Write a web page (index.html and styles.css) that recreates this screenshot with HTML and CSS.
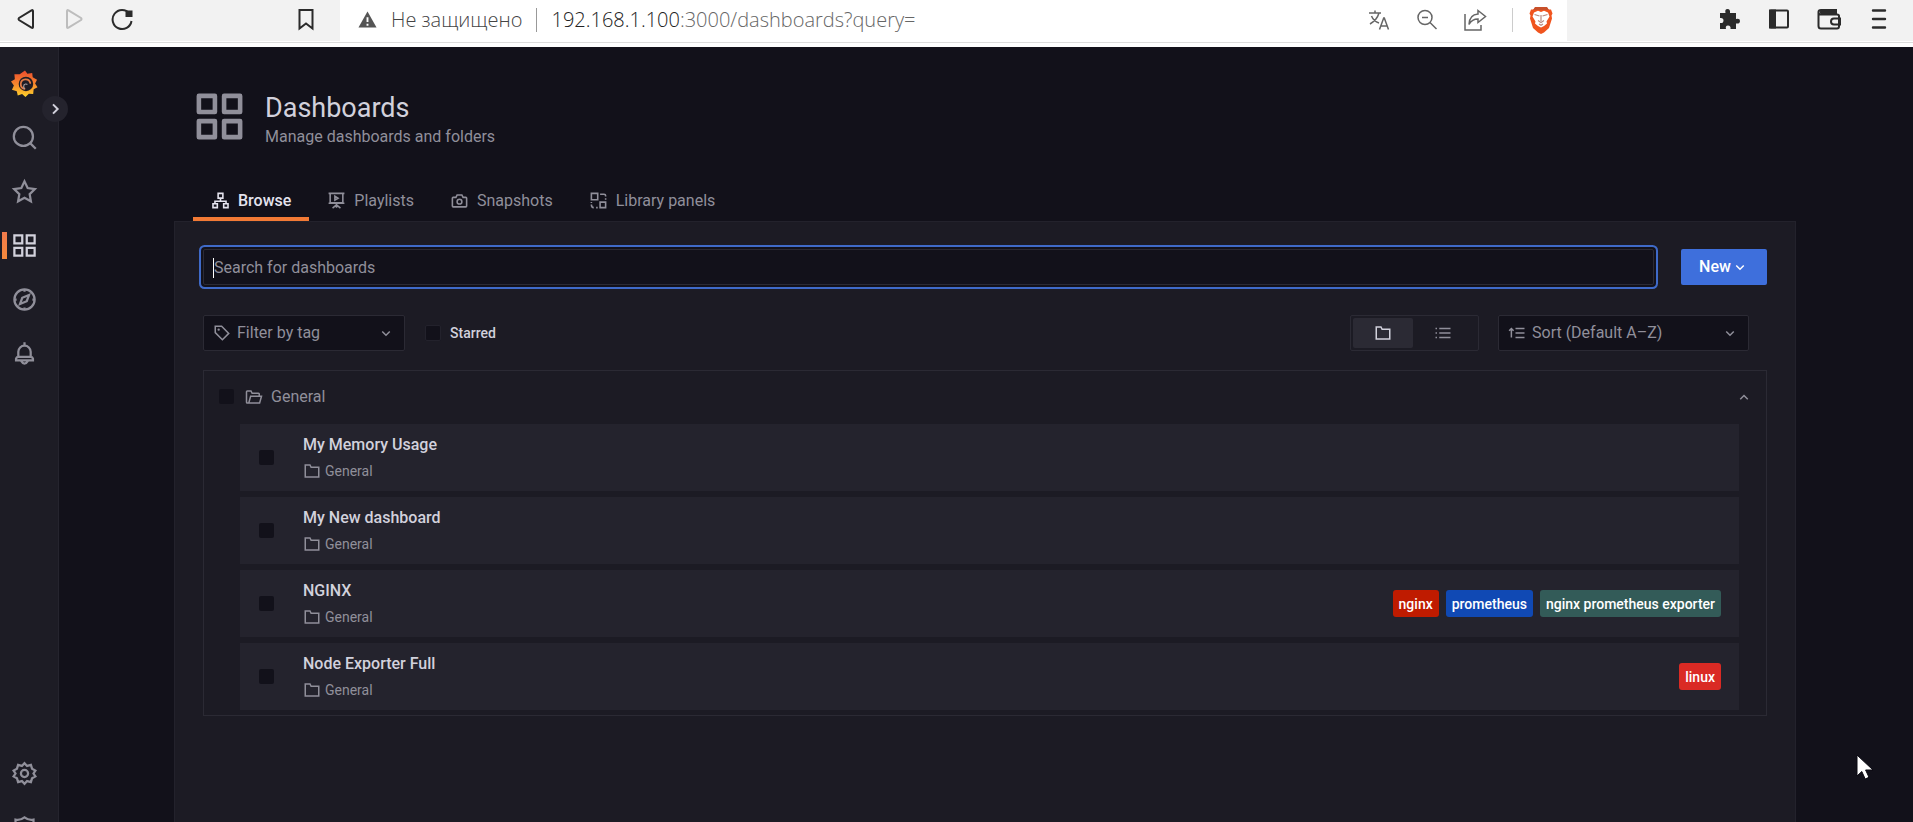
FILE: index.html
```html
<!DOCTYPE html>
<html lang="en">
<head>
<meta charset="utf-8">
<title>Dashboards - Grafana</title>
<link rel="stylesheet" href="styles.css">
</head>
<body>
<svg class="sprite" aria-hidden="true">
  <symbol id="i-apps" viewBox="0 0 24 24"><path d="M3 3h7v7H3zM14 3h7v7h-7zM3 14h7v7H3zM14 14h7v7h-7z"/></symbol>
  <symbol id="i-folder" viewBox="0 0 24 24"><path d="M3 4h6.300l1.500 3H21v13H3z"/></symbol>
  <symbol id="i-down" viewBox="0 0 24 24"><path d="M7 10l5 5 5-5"/></symbol>
  <symbol id="i-up" viewBox="0 0 24 24"><path d="M7 15l5-5 5 5"/></symbol>
</svg>

<header class="chrome">
  <div class="chrome-nav">
    <button class="chrome-btn" aria-label="Back"><svg class="ci" viewBox="0 0 24 24"><path d="M19 4v16q0 1.500-1.500.6L5 13q-1-1 0-2L17.500 3.400Q19 2.500 19 4z"/></svg></button>
    <button class="chrome-btn faded" aria-label="Forward"><svg class="ci" viewBox="0 0 24 24"><path d="M5 4v16q0 1.500 1.500.6L19 13q1-1 0-2L6.500 3.400Q5 2.500 5 4z"/></svg></button>
    <button class="chrome-btn" aria-label="Reload"><svg class="ci" viewBox="0 0 24 24"><path d="M19.500 6.500A9.500 9.500 0 1 0 21.500 14"/><path d="M16.500 4.500h5v4.500h-5z" fill="currentColor"/></svg></button>
  </div>
  <button class="chrome-btn bookmark" aria-label="Bookmark"><svg class="ci" viewBox="0 0 24 24"><path d="M5.500 3h13v18.500l-6.500-5-6.500 5z"/></svg></button>
  <div class="address">
    <svg class="warn" viewBox="0 0 20 20" aria-hidden="true"><path d="M10 1.500 19.500 18.500H.5z" fill="#555"/><path d="M10 7.500v5M10 14.500v2" stroke="#fff" stroke-width="2"/></svg>
    <span class="insecure">Не защищено</span>
    <span class="bar"></span>
    <span class="url"><span class="host">192.168.1.100</span>:3000/dashboards?query=</span>
    <div class="address-tools">
      <button class="chrome-btn thin" aria-label="Translate"><svg class="ci" viewBox="0 0 24 24"><path d="M2 5h12M8 2.500V5M12 5Q10 12 3 16M4.500 8q2 5 7.500 7M12.500 21.500l4.200-11.500h.6l4.200 11.500M14 18h6"/></svg></button>
      <button class="chrome-btn thin" aria-label="Zoom"><svg class="ci" viewBox="0 0 24 24"><circle cx="10" cy="9.500" r="7"/><path d="M15 14.500 21.500 21M7 9.500h6"/></svg></button>
      <button class="chrome-btn thin" aria-label="Share"><svg class="ci" viewBox="0 0 24 24"><path d="M2 6v16h16v-5M15 2.500l7.500 6L15 14.500V11Q9 11 6 16.500 6.500 6.500 15 6z"/></svg></button>
      <span class="bar short"></span>
      <button class="chrome-btn" aria-label="Brave Shields"><svg class="brave" viewBox="0 0 24 28"><path d="M6.500 1h11l2 2.500h2.500l1.500 4-1 2 .5 3-3 9.500-5 4.500-3 1.500-3-1.500-5-4.500L1 12.500l.5-3-1-2L2 3.500h2.500z" fill="#f0541e"/><path d="M6 1h12l2 3H4z" fill="#c8502a"/><path d="M12 6l3-1.200 4 1.700 1.500 4-3 5 .5 2-3 2.500L12 21.500 9 20l-3-2.500.5-2-3-5L5 6.500l4-1.700z" fill="#fff"/><path d="M5.500 8.500l5 1.500M18.500 8.500l-5 1.500M12 9v6M9 14.500l3 2 3-2M10 18l2 1.300 2-1.300" fill="none" stroke="#b98a80" stroke-width="1.200"/></svg></button>
    </div>
  </div>
  <div class="chrome-tools">
    <button class="chrome-btn" aria-label="Extensions"><svg class="ci" viewBox="0 0 24 24"><path d="M3 6h5.500Q7.500 2 10.500 2T13 6h6v6q4-1 4 2t-4 2.500V22h-5.500q.5-3.500-2.500-3.500T9 22H3v-6q3.500.5 3.500-2.500T3 11z" fill="currentColor" stroke="none"/></svg></button>
    <button class="chrome-btn" aria-label="Sidebar"><svg class="ci" viewBox="0 0 24 24"><rect x="3" y="3.500" width="18" height="17" rx="1"/><path d="M3 3.500h5v17H3z" fill="currentColor"/></svg></button>
    <button class="chrome-btn" aria-label="Wallet"><svg class="ci" viewBox="0 0 24 24"><path d="M1.500 5v14q0 2.500 2.500 2.500h16q2 0 2-2V9q0-1.500-2-1.500H4Q1.500 7.500 1.500 5q0-2 2.500-2h15v4"/><path d="M3 4h16v3H4z" fill="currentColor" stroke-width="1"/><path d="M23 11.500h-6a3 3 0 0 0 0 6h6z"/></svg></button>
    <button class="chrome-btn" aria-label="Menu"><svg class="ci" viewBox="0 0 24 24"><path d="M6 3.500h12M6 12h12M6 20.500h12" stroke-width="2.400" stroke-linecap="round"/></svg></button>
  </div>
</header>

<div class="app">
  <nav class="sidebar" aria-label="Main">
    <a class="side-link" href="#" aria-label="Home"><svg class="logo" viewBox="0 0 28 28">
      <defs><linearGradient id="g" x1="0" y1="0" x2="0" y2="1"><stop offset="0" stop-color="#ec4b2e"/><stop offset=".5" stop-color="#f5852d"/><stop offset="1" stop-color="#fcd32b"/></linearGradient></defs>
      <path d="M14.500.5 17 4l5-1 .5 4.500L27 10l-2 4 2.500 4-4 2-.5 5-4.500-.5L15 28l-3.500-3-4.500 1.500L6 22l-5-1.500L3 16 0 12l4-2.500-.5-5L9 4.500z" fill="url(#g)"/>
      <circle cx="15.500" cy="14.500" r="7.500" fill="#1d1c25"/>
      <path d="M14 19.500a5 5 0 1 1 6-6" fill="none" stroke="#e07a45" stroke-width="1.800" stroke-linecap="round"/>
      <path d="M14 19.500q-1.500-2-.5-4a2.500 2.500 0 0 1 3.500-.5" fill="none" stroke="#a9a2a6" stroke-width="1.200"/></svg></a>
    <a class="side-link" href="#" aria-label="Search"><svg class="icon" viewBox="0 0 24 24"><circle cx="11" cy="11" r="8.500"/><path d="M17 17l5 5"/></svg></a>
    <a class="side-link" href="#" aria-label="Starred"><svg class="icon" viewBox="0 0 24 24"><path d="M12 3l2.800 5.900 6.400.9-4.600 4.500 1.100 6.400L12 17.600l-5.700 3.100 1.100-6.400-4.600-4.500 6.400-.9z"/></svg></a>
    <a class="side-link active" href="#" aria-label="Dashboards"><svg class="icon"><use href="#i-apps"/></svg></a>
    <a class="side-link" href="#" aria-label="Explore"><svg class="icon" viewBox="0 0 24 24"><circle cx="12" cy="12" r="9"/><path d="M16 8l-2 5.500L8 16l2-5.500zM12 3v2M12 19v2M3 12h2M19 12h2"/></svg></a>
    <a class="side-link" href="#" aria-label="Alerting"><svg class="icon" viewBox="0 0 24 24"><path d="M12 2v3M6.500 15v-4.500a5.500 5.500 0 0 1 11 0V15M4.500 18v-1.500Q5 15 6.500 15h11q1.500 0 2 1.500V18zM9 18.500q3 5 6 0"/></svg></a>
    <div class="side-bottom">
      <a class="side-link" href="#" aria-label="Configuration"><svg class="icon" viewBox="0 0 24 24"><circle cx="12" cy="12" r="3.200"/><path d="M12 2.800l2.300 2.500 3.400-.9 1 3.300 3 1.700L20 12l1.700 2.600-3 1.700-1 3.300-3.400-.9-2.300 2.500-2.300-2.500-3.400.9-1-3.300-3-1.700L4 12 2.300 9.400l3-1.700 1-3.300 3.400.9z"/></svg></a>
      <a class="side-link" href="#" aria-label="Server admin"><svg class="icon" viewBox="0 0 24 24"><path d="M12 3Q8 6 4 5v7q0 6 8 10 8-4 8-10V5q-4 1-8-2z"/></svg></a>
    </div>
    <button class="side-toggle" aria-label="Expand menu"><svg class="icon" viewBox="0 0 24 24"><path d="M9 5l7 7-7 7"/></svg></button>
  </nav>

  <main class="page">
    <header class="page-head">
      <svg class="page-icon" viewBox="0 0 24 24"><path d="M3 3h7v7H3zM14 3h7v7h-7zM3 14h7v7H3zM14 14h7v7h-7z" stroke-linejoin="round"/></svg>
      <div class="page-titles">
        <h1>Dashboards</h1>
        <p>Manage dashboards and folders</p>
      </div>
    </header>
    <nav class="tabs" aria-label="Sections">
      <a class="tab current" href="#"><svg class="icon" viewBox="0 0 24 24"><path d="M9 3h6v6H9zM2.500 16h5.500v5H2.500zM16 16h5.500v5H16zM12 9v4M5 16v-3h14v3"/></svg>Browse</a>
      <a class="tab" href="#"><svg class="icon" viewBox="0 0 24 24"><path d="M2 3h20M4 3v12h16V3M2 15.500h20M12 15v6M7 21.500l5-4 5 4M10 6.500v5l4-2.500z"/></svg>Playlists</a>
      <a class="tab" href="#"><svg class="icon" viewBox="0 0 24 24"><path d="M4 8h3.500l1.500-3h6l1.500 3H20q1 0 1 1v10q0 1-1 1H4q-1 0-1-1V9q0-1 1-1z"/><circle cx="12" cy="13.500" r="3"/></svg>Snapshots</a>
      <a class="tab" href="#"><svg class="icon" viewBox="0 0 24 24"><path d="M3 3h8v8H3zM14 14h7v7h-7zM14 4h5q2 0 2 2v1M21 9v2M3 14v1M3 17q0 4 3 4M9 21h2"/></svg>Library panels</a>
    </nav>

    <section class="panel">
      <div class="search-row">
        <label class="search"><input type="text" placeholder="Search for dashboards" aria-label="Search for dashboards"></label>
        <button class="new-btn">New<svg class="icon"><use href="#i-down"/></svg></button>
      </div>

      <div class="filters">
        <label class="picker tag-picker"><svg class="icon" viewBox="0 0 24 24"><path d="M3 3h8.500l9.500 9.500L12.500 21 3 11.500z"/><path d="M7.500 7.500h.1" stroke-width="3" stroke-linecap="round"/></svg>
          <select aria-label="Filter by tag"><option>Filter by tag</option></select><svg class="icon"><use href="#i-down"/></svg></label>
        <label class="starred"><input class="box" type="checkbox">Starred</label>
        <div class="views" role="radiogroup" aria-label="View">
          <label class="view"><input type="radio" name="view" aria-label="Folders" checked><svg class="icon"><use href="#i-folder"/></svg></label>
          <label class="view"><input type="radio" name="view" aria-label="List"><svg class="icon" viewBox="0 0 24 24"><path d="M7 6h15M7 12h15M7 18h15M2 6h2M2 12h2M2 18h2"/></svg></label>
        </div>
        <label class="picker sort-picker"><svg class="icon" viewBox="0 0 24 24"><path d="M4.500 18V6M1.500 9l3-3 3 3M10 6h12M10 12h12M10 18h12"/></svg>
          <select aria-label="Sort"><option>Sort (Default A–Z)</option></select><svg class="icon"><use href="#i-down"/></svg></label>
      </div>

      <section class="folder">
        <div class="folder-head">
          <input class="box" type="checkbox" aria-label="Select folder General">
          <svg class="icon" viewBox="0 0 24 24"><path d="M5.500 20H3q-1 0-1-1V5q0-1 1-1h5l1.500 3H18q1 0 1 1v3M5 20l2.500-9H22l-2.500 9z"/></svg>
          <span class="folder-name">General</span>
          <button class="collapse" aria-label="Collapse folder"><svg class="icon"><use href="#i-up"/></svg></button>
        </div>
        <ul class="items">
          <li class="item"><input class="box" type="checkbox" aria-label="Select My Memory Usage">
            <div class="item-text"><a href="#">My Memory Usage</a><span class="where"><svg class="icon"><use href="#i-folder"/></svg>General</span></div></li>
          <li class="item"><input class="box" type="checkbox" aria-label="Select My New dashboard">
            <div class="item-text"><a href="#">My New dashboard</a><span class="where"><svg class="icon"><use href="#i-folder"/></svg>General</span></div></li>
          <li class="item"><input class="box" type="checkbox" aria-label="Select NGINX">
            <div class="item-text"><a href="#">NGINX</a><span class="where"><svg class="icon"><use href="#i-folder"/></svg>General</span></div>
            <div class="tags"><button class="tag red">nginx</button><button class="tag blue">prometheus</button><button class="tag teal">nginx prometheus exporter</button></div></li>
          <li class="item"><input class="box" type="checkbox" aria-label="Select Node Exporter Full">
            <div class="item-text"><a href="#">Node Exporter Full</a><span class="where"><svg class="icon"><use href="#i-folder"/></svg>General</span></div>
            <div class="tags"><button class="tag scarlet">linux</button></div></li>
        </ul>
      </section>
    </section>
  </main>
</div>
<svg class="cursor" viewBox="0 0 18 26" aria-hidden="true"><path d="M1 1v21l4.800-4.500 3.400 7.500 3.800-1.700-3.400-7.300H17z" fill="#fff" stroke="#0b0a12"/></svg>
</body>
</html>
```
FILE: styles.css
```css
:root {
  --canvas: #12111a;
  --surface: #1c1b24;
  --raised: #24232d;
  --line: #2b2a34;
  --text: #d2d1dc;
  --muted: #908f9a;
  --blue: #3e6fdc;
}

* { box-sizing: border-box; }

body {
  margin: 0;
  height: 100vh;
  display: flex;
  flex-direction: column;
  overflow: hidden;
  background: var(--canvas);
  color: var(--muted);
  font: 16px/24px Roboto, "Liberation Sans", sans-serif;
}

button { border: 0; padding: 0; background: none; color: inherit; font: inherit; }
a { color: inherit; text-decoration: none; }
.sprite { position: absolute; width: 0; height: 0; }

.icon, .page-icon, .ci {
  flex: none;
  width: 20px;
  height: 20px;
  fill: none;
  stroke: currentColor;
  stroke-width: 2;
}

/* Browser toolbar */
.chrome {
  flex: none;
  display: flex;
  height: 47px;
  padding-bottom: 6px;
  background: linear-gradient(#fff 0 1px, #dcdcdc 1px 2px, #fff 2px) bottom / 100% 6px no-repeat #f2f2f2;
  color: #2b2b2b;
}
.chrome-btn { display: flex; align-items: center; justify-content: center; width: 24px; height: 37px; }
.ci { width: 24px; height: 24px; }
.faded { color: #bdbdbd; }
.thin { color: #666; }
.thin .ci { stroke-width: 1.500; }
.chrome-nav { display: flex; gap: 24px; padding-left: 14px; }
.bookmark { margin: 0 22px 0 160px; }
.address {
  flex: 1;
  display: flex;
  align-items: center;
  padding: 0 14px 2px 18px;
  background: #fff;
  color: #666;
  font: 300 20px/32px "Open Sans", "Noto Sans", sans-serif;
  white-space: nowrap;
}
.warn { width: 19px; height: 19px; margin-right: 14px; }
.insecure { color: #444; }
.bar { width: 1px; height: 24px; margin: 0 14px; background: #999; }
.host { color: #222; }
.address-tools { display: flex; align-items: center; gap: 24px; margin-left: auto; }
.bar.short { margin: 0 -8px 0 1px; background: #ccc; }
.brave { width: 24px; height: 28px; }
.chrome-tools { display: flex; gap: 26px; padding: 0 22px 0 150px; }

/* App shell */
.app { flex: 1; min-height: 0; display: flex; }
.sidebar {
  position: relative;
  flex: none;
  width: 59px;
  display: flex;
  flex-direction: column;
  padding-top: 9px;
  background: #1d1c25;
  border-right: 1px solid #25242e;
}
.side-link {
  display: flex;
  flex: none;
  align-items: center;
  height: 54px;
  padding-left: 11px;
}
.side-link .icon { width: 27px; height: 27px; }
.logo { width: 27px; height: 27px; }
.active {
  color: var(--text);
  background: linear-gradient(#f27a4b, #f58a3c) 2px center / 5px 27px no-repeat;
}
.side-bottom { margin-top: auto; margin-bottom: -32px; }
.side-toggle {
  position: absolute;
  top: 49px;
  right: -10px;
  display: flex;
  align-items: center;
  justify-content: center;
  width: 26px;
  height: 26px;
  border-radius: 50%;
  background: var(--raised);
  color: var(--text);
}
.side-toggle .icon { width: 16px; height: 16px; stroke-width: 3; }

.page {
  flex: 1;
  min-width: 0;
  display: flex;
  flex-direction: column;
  padding: 42px 117px 0 115px;
}
.page-head { display: flex; gap: 18px; padding-left: 18px; }
.page-icon { width: 55px; height: 55px; }
.page-titles { padding-top: 2px; }
h1 { margin: 0; color: var(--text); font-size: 27px; font-weight: 400; line-height: 34px; }
p { margin: 0; }

.tabs { display: flex; margin-top: 30px; padding-left: 19px; }
.tab {
  display: flex;
  align-items: center;
  gap: 8px;
  height: 42px;
  padding: 5px 18px 0;
  border-bottom: 4px solid transparent;
}
.tab .icon { width: 19px; height: 19px; }
.tab.current { color: #e4e3ee; font-weight: 500; border-color: #f27a35; }

.panel {
  flex: 1;
  padding: 27px 28px 0 28px;
  background: var(--surface);
  border: 1px solid #23222c;
  border-bottom: 0;
}
.search-row { display: flex; gap: 27px; }
.search { position: relative; flex: 1; display: flex; }
.search input {
  width: 100%;
  height: 36px;
  padding: 0 10px;
  border: 1px solid var(--line);
  border-radius: 2px;
  outline: 0;
  background: var(--canvas);
  box-shadow: 0 0 0 2px var(--canvas), 0 0 0 4px #3f6ac8;
  color: var(--text);
  font: inherit;
}
.search input::placeholder { color: var(--muted); opacity: 1; }
.search::before {
  content: "";
  position: absolute;
  left: 10px;
  top: 9px;
  width: 1px;
  height: 20px;
  background: #fff;
}
.new-btn {
  display: flex;
  align-items: center;
  justify-content: center;
  width: 86px;
  border-radius: 2px;
  background: var(--blue);
  color: #fff;
  font-weight: 500;
}
.new-btn .icon { width: 18px; height: 18px; }

.filters { display: flex; align-items: center; margin: 30px 18px 19px 0; }
.picker {
  display: flex;
  align-items: center;
  gap: 6px;
  height: 36px;
  padding: 0 9px;
  border: 1px solid var(--line);
  border-radius: 2px;
  background: var(--canvas);
}
.picker select {
  flex: 1;
  min-width: 0;
  padding: 0;
  appearance: none;
  border: 0;
  background: none;
  color: inherit;
  font: inherit;
}
.picker .icon { width: 18px; height: 18px; }
.tag-picker { width: 202px; }
.sort-picker { width: 251px; margin-left: 19px; }
.starred {
  display: flex;
  align-items: center;
  gap: 9px;
  margin-left: 20px;
  color: var(--text);
  font-size: 14px;
  font-weight: 500;
}
.box { flex: none; appearance: none; width: 15px; height: 15px; margin: 0; border-radius: 2px; background: var(--canvas); }
.starred .box { width: 16px; height: 16px; border: 1px solid #23222c; }
.views {
  display: flex;
  width: 129px;
  height: 36px;
  margin-left: auto;
  padding: 2px;
  border: 1px solid var(--line);
  border-radius: 2px;
}
.view { display: flex; align-items: center; justify-content: center; width: 60px; border-radius: 2px; }
.view input { position: absolute; opacity: 0; pointer-events: none; }
.view:has(:checked) { background: #2b2a34; color: var(--text); }
.view .icon { width: 18px; height: 18px; }

.folder { padding-bottom: 5px; border: 1px solid var(--line); }
.folder-head { display: flex; align-items: center; height: 53px; padding: 0 13px 2px 15px; }
.folder-head > .icon { width: 18px; height: 18px; margin: 0 8px 0 11px; }
.collapse { display: flex; margin-left: auto; }
.collapse .icon { width: 18px; height: 18px; }
.items { display: grid; gap: 6px; margin: 0 27px 0 36px; padding: 0; list-style: none; }
.item { display: flex; align-items: center; height: 67px; padding: 0 18px 0 19px; background: var(--raised); }
.item-text { display: flex; flex-direction: column; gap: 2px; margin-left: 29px; }
.item-text a { color: var(--text); font-weight: 500; }
.where { display: flex; align-items: center; gap: 4px; font-size: 14px; }
.where .icon { width: 18px; height: 18px; }
.tags { display: flex; gap: 7px; margin-left: auto; }
.tag { height: 27px; padding: 0 6px; border-radius: 3px; color: #fff; font-size: 14px; font-weight: 500; line-height: 26px; }
.red { background: #bf1b00; }
.blue { background: #1049b4; }
.teal { background: #335b58; }
.scarlet { background: #da2a24; }

.cursor { position: absolute; right: 39px; top: 754px; width: 18px; height: 26px; }
```
